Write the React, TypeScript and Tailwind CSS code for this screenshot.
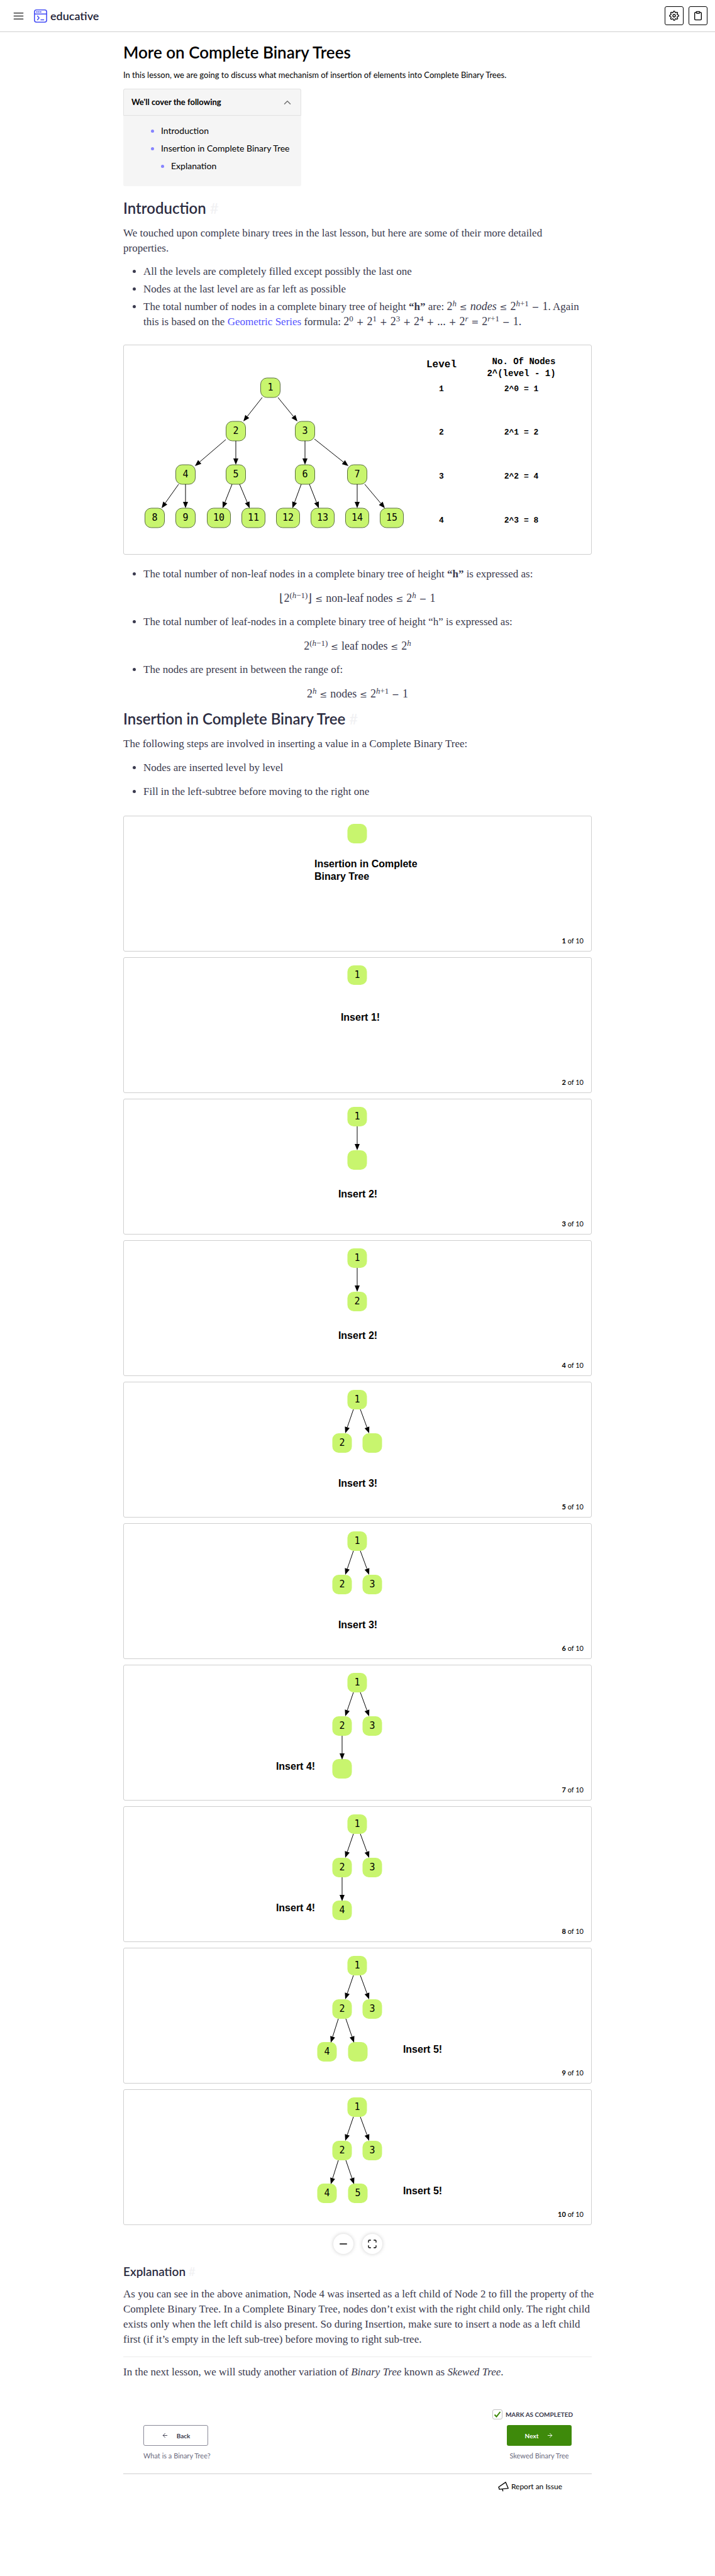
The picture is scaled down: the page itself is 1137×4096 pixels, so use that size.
import type { ReactNode } from "react";
import {
  FiArrowLeft,
  FiArrowRight,
  FiChevronUp,
  FiClipboard,
  FiMaximize,
  FiMenu,
  FiMinus,
  FiSettings,
} from "react-icons/fi";

type TreeNode = { x: number; y: number; label?: string; wide?: boolean };
type Edge = [number, number, number, number];
type Caption = { x: number; y: number; lines: string[]; anchor?: "start" | "middle" };
type Slide = { nodes: TreeNode[]; edges: Edge[]; caption: Caption };

/* ---------- tree drawing ---------- */

function Arrow({ edge }: { edge: Edge }) {
  const [x1, y1, x2, y2] = edge;
  const length = Math.hypot(x2 - x1, y2 - y1);
  const ux = (x2 - x1) / length;
  const uy = (y2 - y1) / length;
  const bx = x2 - ux * 10;
  const by = y2 - uy * 10;
  const head = `${x2},${y2} ${bx - uy * 4},${by + ux * 4} ${bx + uy * 4},${by - ux * 4}`;
  return (
    <g>
      <line x1={x1} y1={y1} x2={bx} y2={by} stroke="#000" strokeWidth="1" />
      <polygon points={head} fill="#000" />
    </g>
  );
}

function TreeDrawing({ nodes, edges, outlined = false }: { nodes: TreeNode[]; edges: Edge[]; outlined?: boolean }) {
  return (
    <g>
      {nodes.map((n, i) => {
        const w = n.wide ? 37 : 31;
        return (
          <g key={i}>
            <rect
              x={n.x - w / 2}
              y={n.y - 15}
              width={w}
              height={31}
              rx={10}
              fill="#c8f56e"
              stroke={outlined ? "#5b7040" : "none"}
              strokeWidth="1"
            />
            {n.label && (
              <text x={n.x} y={n.y + 5} textAnchor="middle" className="font-['DejaVu_Sans_Mono',monospace] text-[15px]">
                {n.label}
              </text>
            )}
          </g>
        );
      })}
      {edges.map((e, i) => (
        <Arrow key={i} edge={e} />
      ))}
    </g>
  );
}

const fullTree: TreeNode[] = [
  { x: 234, y: 68, label: "1" },
  { x: 179, y: 137, label: "2" },
  { x: 289, y: 137, label: "3" },
  { x: 99, y: 206, label: "4" },
  { x: 179, y: 206, label: "5" },
  { x: 289, y: 206, label: "6" },
  { x: 372, y: 206, label: "7" },
  { x: 50, y: 275, label: "8" },
  { x: 99, y: 275, label: "9" },
  { x: 152, y: 275, label: "10", wide: true },
  { x: 207, y: 275, label: "11", wide: true },
  { x: 262, y: 275, label: "12", wide: true },
  { x: 317, y: 275, label: "13", wide: true },
  { x: 372, y: 275, label: "14", wide: true },
  { x: 427, y: 275, label: "15", wide: true },
];

const fullTreeEdges: Edge[] = [
  [221, 84, 191, 122],
  [246, 84, 277, 122],
  [163, 151, 114, 193],
  [179, 153, 179, 191],
  [289, 153, 289, 191],
  [304, 150, 358, 193],
  [88, 222, 61, 260],
  [99, 222, 99, 260],
  [173, 222, 158, 260],
  [185, 222, 201, 260],
  [283, 222, 269, 260],
  [296, 222, 311, 260],
  [372, 222, 372, 260],
  [384, 222, 416, 260],
];

const levels = [
  { y: 74, level: "1", count: "2^0 = 1" },
  { y: 143, level: "2", count: "2^1 = 2" },
  { y: 213, level: "3", count: "2^2 = 4" },
  { y: 283, level: "4", count: "2^3 = 8" },
];

const root: TreeNode = { x: 372, y: 28, label: "1" };
const left: TreeNode = { x: 348, y: 97, label: "2" };
const right: TreeNode = { x: 396, y: 97, label: "3" };
const rootEdges: Edge[] = [
  [366, 44, 353, 82],
  [377, 44, 391, 82],
];
const leftEdges: Edge[] = [
  [342, 113, 330, 151],
  [354, 113, 367, 151],
];

const slides: Slide[] = [
  {
    nodes: [{ x: 372, y: 28 }],
    edges: [],
    caption: { x: 304, y: 82, lines: ["Insertion in Complete", "Binary Tree"], anchor: "start" },
  },
  { nodes: [root], edges: [], caption: { x: 377, y: 101, lines: ["Insert 1!"] } },
  {
    nodes: [root, { x: 372, y: 97 }],
    edges: [[372, 44, 372, 82]],
    caption: { x: 373, y: 157, lines: ["Insert 2!"] },
  },
  {
    nodes: [root, { x: 372, y: 97, label: "2" }],
    edges: [[372, 44, 372, 82]],
    caption: { x: 373, y: 157, lines: ["Insert 2!"] },
  },
  { nodes: [root, left, { x: 396, y: 97 }], edges: rootEdges, caption: { x: 373, y: 167, lines: ["Insert 3!"] } },
  { nodes: [root, left, right], edges: rootEdges, caption: { x: 373, y: 167, lines: ["Insert 3!"] } },
  {
    nodes: [root, left, right, { x: 348, y: 165 }],
    edges: [...rootEdges, [348, 113, 348, 151]],
    caption: { x: 274, y: 167, lines: ["Insert 4!"] },
  },
  {
    nodes: [root, left, right, { x: 348, y: 165, label: "4" }],
    edges: [...rootEdges, [348, 113, 348, 151]],
    caption: { x: 274, y: 167, lines: ["Insert 4!"] },
  },
  {
    nodes: [root, left, right, { x: 324, y: 165, label: "4" }, { x: 373, y: 165 }],
    edges: [...rootEdges, ...leftEdges],
    caption: { x: 476, y: 167, lines: ["Insert 5!"] },
  },
  {
    nodes: [root, left, right, { x: 324, y: 165, label: "4" }, { x: 373, y: 165, label: "5" }],
    edges: [...rootEdges, ...leftEdges],
    caption: { x: 476, y: 167, lines: ["Insert 5!"] },
  },
];

function SlideCard({ slide, index, total }: { slide: Slide; index: number; total: number }) {
  const { caption } = slide;
  return (
    <li className="rounded-[3px] border border-[#cfcfcf] pb-2">
      <svg viewBox="1 1 743 190" className="block w-full" role="img" aria-label={caption.lines.join(" ")}>
        <TreeDrawing nodes={slide.nodes} edges={slide.edges} />
        {caption.lines.map((line, i) => (
          <text
            key={line}
            x={caption.x}
            y={caption.y + i * 20}
            textAnchor={caption.anchor ?? "middle"}
            className="font-['Liberation_Sans',sans-serif] text-[16px] font-bold"
          >
            {line}
          </text>
        ))}
      </svg>
      <p className="pr-3 text-right text-[11px] leading-4 text-black">
        <b>{index}</b> of {total}
      </p>
    </li>
  );
}

/* ---------- math notation ---------- */

function Op({ children }: { children: ReactNode }) {
  return <span className="mx-[5px] font-['DejaVu_Serif',serif] text-[14px] leading-none">{children}</span>;
}

function Sup({ children }: { children: ReactNode }) {
  return <sup className="text-[13px] leading-none">{children}</sup>;
}

function InlineMath({ children }: { children: ReactNode }) {
  return <span className="text-[18px] leading-none whitespace-nowrap">{children}</span>;
}

function Formula({ children }: { children: ReactNode }) {
  return <p className="mt-[14px] h-6 text-center text-[18px]">{children}</p>;
}

/* ---------- page parts ---------- */

function Logo() {
  return (
    <svg viewBox="0 0 26 26" className="size-[21px]" fill="none" stroke="#4951f5" strokeWidth="2" aria-hidden="true">
      <rect x="1" y="1" width="24" height="24" rx="4" />
      <path d="M1 9h24" />
      <path d="M4.500 5h2.500M8.200 5h2.500M11.900 5h2.500" strokeWidth="2.400" />
      <path d="M6.500 12.500l3.500 4.200-3.500 4.300M13 20.500h7" />
    </svg>
  );
}

function Megaphone() {
  return (
    <svg viewBox="0 0 23 21" className="h-4 w-[18px]" fill="none" stroke="#000" strokeWidth="1.800" strokeLinejoin="round" aria-hidden="true">
      <path d="M15.600 1.200L21 14 2.500 16 1 11.200z" />
      <path d="M8.600 15.400l1.400 4.600" />
    </svg>
  );
}

function SectionHeading({ children }: { children: string }) {
  return (
    <h2 className="text-[24px] leading-[30px] font-semibold text-[#2d2d42]">
      {children} <span className="font-normal text-[#f1f1f3]">#</span>
    </h2>
  );
}

const body = "font-['Liberation_Serif',serif] text-[17px] leading-6 text-[#3a3a4e]";

export default function App() {
  return (
    <div className="min-h-screen bg-white font-['Lato',sans-serif] text-black">
      <header className="flex h-[51px] items-center border-b border-[#d0d0d0] pr-3 pl-5">
        <button type="button" aria-label="Open menu" className="text-[#3d3d3d]">
          <FiMenu className="size-[19px]" />
        </button>
        <a href="#home" className="ml-[15px] flex items-center gap-[5px]">
          <Logo />
          <span className="text-[18px] leading-6 font-semibold text-[#1f1f38]">educative</span>
        </a>
        <div className="ml-auto flex gap-2">
          <button type="button" aria-label="Settings" className="flex size-[30px] items-center justify-center rounded-[3px] border border-black">
            <FiSettings className="size-4" />
          </button>
          <button type="button" aria-label="Notes" className="flex size-[30px] items-center justify-center rounded-[3px] border border-black">
            <FiClipboard className="size-4" />
          </button>
        </div>
      </header>

      <main className="mx-auto max-w-[745px] pt-4 pb-[134px]">
        <h1 className="text-[26px] leading-8 font-semibold">More on Complete Binary Trees</h1>
        <p className="mt-[10px] text-[13px] leading-5">
          In this lesson, we are going to discuss what mechanism of insertion of elements into Complete Binary Trees.
        </p>

        <nav aria-label="Lesson contents" className="mt-3 w-[283px] rounded-[3px] bg-[#f5f5f5]">
          <button type="button" className="flex h-[43px] w-full items-center justify-between rounded-t-[3px] border border-[#e2e2e2] px-3">
            <span className="text-[13px] font-bold">We'll cover the following</span>
            <FiChevronUp className="size-[18px] text-[#707070]" />
          </button>
          <ul className="list-disc pt-[10px] pb-[18px] pl-[60px] text-[14px] leading-7 marker:text-[#8583ff]">
            <li>
              <a href="#introduction">Introduction</a>
            </li>
            <li>
              <a href="#insertion">Insertion in Complete Binary Tree</a>
              <ul className="list-disc pl-4">
                <li>
                  <a href="#explanation">Explanation</a>
                </li>
              </ul>
            </li>
          </ul>
        </nav>

        <section id="introduction" className="mt-5">
          <SectionHeading>Introduction</SectionHeading>
          <div className={body}>
            <p className="mt-[13px]">
              We touched upon complete binary trees in the last lesson, but here are some of their more detailed
              <br />
              properties.
            </p>
            <ul className="mt-[13px] list-disc space-y-1 pl-8">
              <li>All the levels are completely filled except possibly the last one</li>
              <li>Nodes at the last level are as far left as possible</li>
              <li>
                The total number of nodes in a complete binary tree of height <b>“h”</b> are:{" "}
                <InlineMath>
                  2<Sup><i>h</i></Sup>
                  <Op>≤</Op>
                  <i>nodes</i>
                  <Op>≤</Op>2<Sup><i>h</i>+1</Sup>
                  <Op>−</Op>1
                </InlineMath>
                . Again
                <br />
                this is based on the{" "}
                <a href="#geometric-series" className="text-[#5553ff]">
                  Geometric Series
                </a>{" "}
                formula:{" "}
                <InlineMath>
                  2<Sup>0</Sup>
                  <Op>+</Op>2<Sup>1</Sup>
                  <Op>+</Op>2<Sup>3</Sup>
                  <Op>+</Op>2<Sup>4</Sup>
                  <Op>+</Op>...
                  <Op>+</Op>2<Sup><i>r</i></Sup>
                  <Op>=</Op>2<Sup><i>r</i>+1</Sup>
                  <Op>−</Op>1.
                </InlineMath>
              </li>
            </ul>
          </div>

          <figure className="mt-6 rounded-[3px] border border-[#cfcfcf]">
            <svg viewBox="1 1 743 332" className="block w-full" role="img" aria-label="Complete binary tree with four levels">
              <TreeDrawing nodes={fullTree} edges={fullTreeEdges} outlined />
              <g textAnchor="middle" className="font-['Liberation_Mono',monospace] text-[13px] font-bold">
                <text x="506" y="36" className="text-[16px]">Level</text>
                <text x="637" y="31" className="text-[14px]">No. Of Nodes</text>
                <text x="633" y="50" className="text-[14px]">2^(level - 1)</text>
                {levels.map((row) => (
                  <g key={row.level}>
                    <text x="506" y={row.y}>{row.level}</text>
                    <text x="633" y={row.y}>{row.count}</text>
                  </g>
                ))}
              </g>
            </svg>
          </figure>

          <ul className={`${body} mt-[19px] list-disc space-y-[14px]`}>
            <li className="ml-8">
              The total number of non-leaf nodes in a complete binary tree of height <b>“h”</b> is expressed as:
              <div className="-ml-8">
                <Formula>
                  ⌊2<Sup>(<i>h</i>−1)</Sup>⌋<Op>≤</Op>non-leaf nodes<Op>≤</Op>2<Sup><i>h</i></Sup>
                  <Op>−</Op>1
                </Formula>
              </div>
            </li>
            <li className="ml-8">
              The total number of leaf-nodes in a complete binary tree of height “h” is expressed as:
              <div className="-ml-8">
                <Formula>
                  2<Sup>(<i>h</i>−1)</Sup>
                  <Op>≤</Op>leaf nodes<Op>≤</Op>2<Sup><i>h</i></Sup>
                </Formula>
              </div>
            </li>
            <li className="ml-8">
              The nodes are present in between the range of:
              <div className="-ml-8">
                <Formula>
                  2<Sup><i>h</i></Sup>
                  <Op>≤</Op>nodes<Op>≤</Op>2<Sup><i>h</i>+1</Sup>
                  <Op>−</Op>1
                </Formula>
              </div>
            </li>
          </ul>
        </section>

        <section id="insertion" className="mt-[13px]">
          <SectionHeading>Insertion in Complete Binary Tree</SectionHeading>
          <div className={body}>
            <p className="mt-[13px]">The following steps are involved in inserting a value in a Complete Binary Tree:</p>
            <ul className="mt-[14px] list-disc space-y-[14px] pl-8">
              <li>Nodes are inserted level by level</li>
              <li>Fill in the left-subtree before moving to the right one</li>
            </ul>
          </div>

          <ol className="mt-[26px] space-y-[9px]">
            {slides.map((slide, i) => (
              <SlideCard key={i} slide={slide} index={i + 1} total={slides.length} />
            ))}
          </ol>

          <div className="mt-[14px] flex justify-center gap-[14px]">
            <button type="button" aria-label="Collapse slides" className="flex size-8 items-center justify-center rounded-full bg-white shadow-[0_0_6px_rgba(0,0,0,0.2)]">
              <FiMinus className="size-[18px]" />
            </button>
            <button type="button" aria-label="Full screen" className="flex size-8 items-center justify-center rounded-full bg-white shadow-[0_0_6px_rgba(0,0,0,0.2)]">
              <FiMaximize className="size-4" />
            </button>
          </div>
        </section>

        <section id="explanation" className="mt-[14px]">
          <h3 className="text-[19px] leading-7 font-semibold text-[#2d2d42]">
            Explanation <span className="font-normal text-[#f1f1f3]">#</span>
          </h3>
          <div className={body}>
            <p className="mt-[10px] -mr-3">
              As you can see in the above animation, Node 4 was inserted as a left child of Node 2 to fill the property of the
              <br />
              Complete Binary Tree. In a Complete Binary Tree, nodes don’t exist with the right child only. The right child
              <br />
              exists only when the left child is also present. So during Insertion, make sure to insert a node as a left child
              <br />
              first (if it’s empty in the left sub-tree) before moving to right sub-tree.
            </p>
            <hr className="mt-[15px] border-[#ebebeb]" />
            <p className="mt-3">
              In the next lesson, we will study another variation of <i>Binary Tree</i> known as <i>Skewed Tree</i>.
            </p>
          </div>
        </section>

        <footer className="mt-[47px]">
          <label className="flex items-center justify-end gap-[5px] pr-[30px] text-[10px] leading-4 font-bold text-[#3a3a4e]">
            <span className="relative size-4">
              <input type="checkbox" defaultChecked className="block size-4 appearance-none rounded-[3px] border border-[#c2c2c2] bg-white" />
              <svg viewBox="0 0 16 16" className="pointer-events-none absolute inset-0 size-4" fill="none" stroke="#3e8a0b" strokeWidth="2" aria-hidden="true">
                <path d="M3.500 8.500l3 3.200L12.500 4" />
              </svg>
            </span>
            MARK AS COMPLETED
          </label>
          <div className="mt-[9px] flex items-start justify-between px-8 text-[11px] leading-4 text-[#6b6b80]">
            <div>
              <button type="button" className="flex h-[33px] w-[103px] items-center justify-center gap-[13px] rounded-[3px] border border-[#8a8a99] text-[10px] font-bold text-[#3a3a4e]">
                <FiArrowLeft className="size-[11px]" />
                Back
              </button>
              <p className="mt-2">What is a Binary Tree?</p>
            </div>
            <div className="flex flex-col items-center">
              <button type="button" className="flex h-[33px] w-[103px] items-center justify-center gap-[13px] rounded-[3px] bg-[#3e8a0b] text-[10px] font-bold text-white">
                Next
                <FiArrowRight className="size-[11px]" />
              </button>
              <p className="mt-2">Skewed Binary Tree</p>
            </div>
          </div>
          <div className="mt-5 flex justify-end border-t border-[#cfcfcf] pt-3 pr-[47px]">
            <button type="button" className="flex items-center gap-[3px] text-[12px] leading-4">
              <Megaphone />
              Report an Issue
            </button>
          </div>
        </footer>
      </main>
    </div>
  );
}
